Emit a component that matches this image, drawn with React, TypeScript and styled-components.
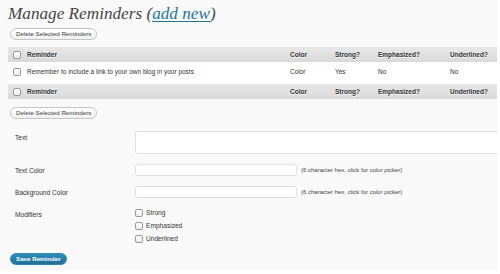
import styled, { createGlobalStyle } from "styled-components";

const GlobalStyle = createGlobalStyle`
  html, body {
    margin: 0;
    padding: 0;
    background: #ffffff;
  }
  body {
    font-family: "Liberation Sans", Arial, sans-serif;
    color: #333;
  }
`;

const Panel = styled.div`
  width: 497px;
  height: 270px;
  background: #f9f9f9;
  box-sizing: border-box;
  padding: 4px 0 0 8px;
  overflow: hidden;
`;

const Title = styled.h2`
  margin: 0;
  height: 20px;
  font-family: "Liberation Serif", "Times New Roman", serif;
  font-style: italic;
  font-weight: normal;
  font-size: 17.2px;
  line-height: 20px;
  color: #464646;
  a {
    color: #21759b;
    text-decoration: underline;
    text-underline-offset: 2px;
  }
`;

const PillButton = styled.button<{ $primary?: boolean }>`
  display: block;
  height: 12px;
  padding: 0 5px;
  margin-left: 2px;
  border-radius: 7px;
  font-family: "Liberation Sans", Arial, sans-serif;
  font-size: 6.2px;
  line-height: 10px;
  cursor: pointer;
  border: 1px solid ${(p) => (p.$primary ? "#298cba" : "#c4c4c4")};
  background: ${(p) =>
    p.$primary ? "linear-gradient(#2e8bb8, #1f6f98)" : "linear-gradient(#ffffff, #f0f0f0)"};
  color: ${(p) => (p.$primary ? "#fff" : "#3a3a3a")};
  font-weight: ${(p) => (p.$primary ? "bold" : "normal")};
`;

const Table = styled.div`
  margin-top: 7px;
  width: 100%;
  background: #fff;
`;

const Row = styled.div<{ $head?: boolean }>`
  display: grid;
  grid-template-columns: 19px 263px 45px 43px 72px 1fr;
  align-items: ${(p) => (p.$head ? "center" : "start")};
  height: ${(p) => (p.$head ? "15px" : "22px")};
  box-sizing: border-box;
  padding-top: ${(p) => (p.$head ? "0" : "5px")};
  background: ${(p) => (p.$head ? "linear-gradient(#e7e7e7, #d9d9d9)" : "#fff")};
  border-top: 1px solid ${(p) => (p.$head ? "#e4e4e4" : "#fff")};
  font-size: 6.5px;
  font-weight: ${(p) => (p.$head ? "bold" : "normal")};
  color: ${(p) => (p.$head ? "#333" : "#333")};
  text-shadow: ${(p) => (p.$head ? "0 1px 0 rgba(255,255,255,0.8)" : "none")};
`;

const Cell = styled.div`
  white-space: nowrap;
  line-height: 8px;
`;

const Box = styled.span`
  display: inline-block;
  width: 6px;
  height: 6px;
  border: 1px solid #9a9a9a;
  border-radius: 2px;
  background: linear-gradient(#fff, #ececec);
  vertical-align: middle;
  flex-shrink: 0;
`;

const BoxCell = styled.div`
  padding-left: 5px;
  line-height: 0;
`;

const Spacer = styled.div<{ $h: number }>`
  height: ${(p) => p.$h}px;
`;

const Form = styled.div`
  margin-top: 12px;
  display: grid;
  grid-template-columns: 127px 1fr;
  row-gap: 10px;
  font-size: 6.6px;
  color: #333;
`;

const Label = styled.div`
  padding-left: 7px;
  padding-top: 3px;
  line-height: 8px;
`;

const Field = styled.div`
  display: flex;
  align-items: center;
  gap: 4px;
`;

const TextArea = styled.div`
  width: 100%;
  height: 23px;
  box-sizing: border-box;
  background: #fff;
  border: 1px solid #dfdfdf;
  border-right: none;
  border-radius: 3px 0 0 3px;
`;

const Input = styled.div`
  width: 162px;
  height: 12px;
  box-sizing: border-box;
  background: #fff;
  border: 1px solid #dfdfdf;
  border-radius: 3px;
`;

const Hint = styled.span`
  font-size: 6px;
  color: #444;
  white-space: nowrap;
`;

const Checks = styled.div`
  display: flex;
  flex-direction: column;
  gap: 4px;
`;

const CheckLine = styled.label`
  display: flex;
  align-items: center;
  gap: 3px;
  height: 9px;
  font-size: 6.6px;
  color: #333;
`;

const SaveWrap = styled.div`
  margin-top: 10px;
`;

export default function App() {
  const header = (
    <Row $head>
      <BoxCell>
        <Box />
      </BoxCell>
      <Cell>Reminder</Cell>
      <Cell>Color</Cell>
      <Cell>Strong?</Cell>
      <Cell>Emphasized?</Cell>
      <Cell>Underlined?</Cell>
    </Row>
  );

  return (
    <>
      <GlobalStyle />
      <Panel>
        <Title>
          Manage Reminders (<a href="#">add new</a>)
        </Title>
        <Spacer $h={4} />
        <PillButton>Delete Selected Reminders</PillButton>
        <Table>
          {header}
          <Row>
            <BoxCell>
              <Box />
            </BoxCell>
            <Cell>Remember to include a link to your own blog in your posts</Cell>
            <Cell>Color</Cell>
            <Cell>Yes</Cell>
            <Cell>No</Cell>
            <Cell>No</Cell>
          </Row>
          {header}
        </Table>
        <Spacer $h={8} />
        <PillButton>Delete Selected Reminders</PillButton>
        <Form>
          <Label>Text</Label>
          <Field>
            <TextArea />
          </Field>
          <Label>Text Color</Label>
          <Field>
            <Input />
            <Hint>(6 character hex, click for color picker)</Hint>
          </Field>
          <Label>Background Color</Label>
          <Field>
            <Input />
            <Hint>(6 character hex, click for color picker)</Hint>
          </Field>
          <Label>Modifiers</Label>
          <Checks>
            <CheckLine>
              <Box />
              Strong
            </CheckLine>
            <CheckLine>
              <Box />
              Emphasized
            </CheckLine>
            <CheckLine>
              <Box />
              Underlined
            </CheckLine>
          </Checks>
        </Form>
        <SaveWrap>
          <PillButton $primary>Save Reminder</PillButton>
        </SaveWrap>
      </Panel>
    </>
  );
}
